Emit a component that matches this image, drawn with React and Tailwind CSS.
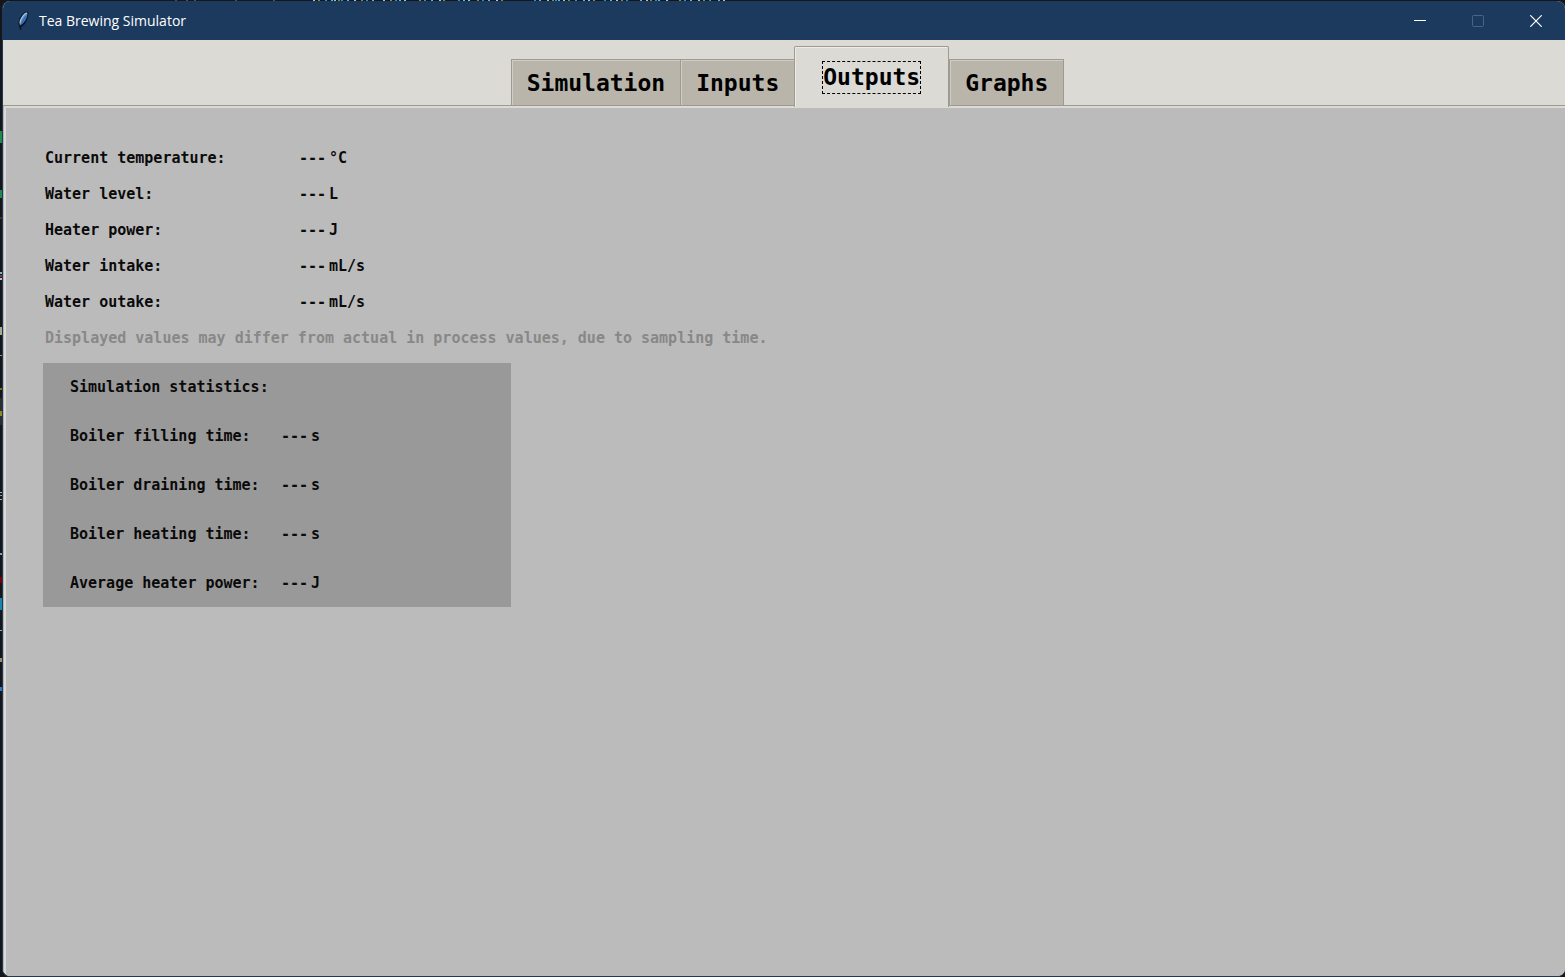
import React, { useState } from "react";

const tabs = ["Simulation", "Inputs", "Outputs", "Graphs"];

const readings = [
  ["Current temperature:", "---", "°C"],
  ["Water level:", "---", "L"],
  ["Heater power:", "---", "J"],
  ["Water intake:", "---", "mL/s"],
  ["Water outake:", "---", "mL/s"],
];

const statistics = [
  ["Boiler filling time:", "---", "s"],
  ["Boiler draining time:", "---", "s"],
  ["Boiler heating time:", "---", "s"],
  ["Average heater power:", "---", "J"],
];

// Glimpses of the editor behind the window: [y, height, colour]
const leftMarks = [
  [131, 12, "#1f8a4c"],
  [190, 8, "#1f8a4c"],
  [217, 2, "#5a2a1a"],
  [272, 2, "#7fb2cc"],
  [275, 2, "#a03030"],
  [278, 2, "#b9c4c9"],
  [327, 8, "#a9a98c"],
  [355, 1, "#b08080"],
  [388, 2, "#8a6a10"],
  [411, 5, "#8a8a20"],
  [492, 1, "#b0b0b0"],
  [495, 1, "#6f9fc0"],
  [499, 1, "#b0b0b0"],
  [553, 2, "#7f9fb5"],
  [577, 6, "#7a0008"],
  [598, 12, "#1b86ad"],
  [630, 1, "#7fb2cc"],
  [658, 4, "#9a8a70"],
  [687, 4, "#2f78c8"],
];

const topMarks = [
  175, 186, 194, 235, 273, 313, 318, 325, 331, 334, 338, 341, 347, 354, 361,
  366, 372, 383, 390, 395, 399, 404, 419, 424, 431, 439, 443, 458, 463, 468,
  477, 482, 488, 496, 501, 534, 539, 547, 552, 555, 558, 563, 568, 575, 583,
  588, 593, 604, 610, 616, 621, 626, 640, 646, 650, 655, 658, 666, 679, 684,
  690, 698, 703, 709, 718, 723,
];
const topColours = ["#5fb4cf", "#9cc3d8", "#8a8a30", "#2f8fd0"];

function Desktop() {
  return (
    <svg
      className="pointer-events-none absolute left-0 top-0 h-full w-full"
      aria-hidden="true"
    >
      <rect x="0" y="398" width="2" height="27" fill="#2b2d33" />
      {leftMarks.map(([y, h, c]) => (
        <rect key={y} x="0" y={y} width="2" height={h} fill={c} />
      ))}
      {topMarks.map((x, i) => (
        <rect
          key={x}
          x={x}
          y="0"
          width="2"
          height="1"
          fill={x < 300 ? "#5c4a45" : topColours[i % 4]}
        />
      ))}
    </svg>
  );
}

function Feather() {
  return (
    <svg width="16" height="20" viewBox="0 0 16 20" aria-hidden="true">
      <path
        d="M12.800 .3C9 .8 6.500 3.500 4.600 7.500L3.200 12 4 15.500 5 19 6.300 18.500 6.500 16C10.500 13.500 13 8.500 13.400 2Z"
        fill="#0c1624"
      />
      <path
        d="M12.300 1.500C9 2.600 6.800 5.500 5.300 9L4.700 14.500C8.500 13 11.800 8 12.400 3Z"
        fill="#4387d6"
      />
      <path
        d="M12 1.800C9 3 7 6 5.500 9.500L5 12.500"
        stroke="#a9bfcc"
        strokeWidth="1.400"
        fill="none"
      />
      <path d="M10.600 5.500 6.500 12.500" stroke="#1f4a85" strokeWidth=".7" />
    </svg>
  );
}

function TitleBar() {
  return (
    <header className="flex h-[39px] items-center bg-[#1c3a5e] pl-3 text-white">
      <Feather />
      <h1 className="ml-2 flex-1 font-['Open_Sans','Noto_Sans',sans-serif] text-[14px] font-normal leading-5">
        Tea Brewing Simulator
      </h1>
      <button aria-label="Minimize" className="flex h-full w-[58px] items-center justify-center">
        <svg width="12" height="12" viewBox="0 0 12 12">
          <path d="M0 5.500H12" stroke="#fff" />
        </svg>
      </button>
      <button
        aria-label="Maximize"
        disabled
        className="flex h-full w-[58px] items-center justify-center"
      >
        <svg width="12" height="12" viewBox="0 0 12 12" fill="none">
          <rect x=".5" y=".5" width="11" height="11" rx="1" stroke="#4a6483" />
        </svg>
      </button>
      <button aria-label="Close" className="flex h-full w-[58px] items-center justify-center">
        <svg width="12" height="12" viewBox="0 0 12 12">
          <path d="M.3 .3 11.700 11.700M11.700 .3 .3 11.700" stroke="#fff" strokeWidth="1.200" />
        </svg>
      </button>
    </header>
  );
}

function Tab({ name, active, onSelect }) {
  return (
    <button
      role="tab"
      aria-selected={active}
      onClick={onSelect}
      className={
        active
          ? "relative -mb-[2px] flex h-[61px] items-start justify-center rounded-t-[2px] border border-b-0 border-[#9e9a91] bg-[#dcdad5] px-[27px] pt-[14px] shadow-[inset_1px_1px_0_#eeebe7]"
          : "flex h-[46px] items-center justify-center border-l border-t border-[#9e9a91] bg-[#bab5ab] px-[15px] pt-[2px] shadow-[inset_1px_1px_0_#cfcdc8] last:border-r"
      }
    >
      <span
        className={
          active
            ? "border border-dashed border-black leading-[31px]"
            : "leading-[31px]"
        }
      >
        {name}
      </span>
    </button>
  );
}

function Reading({ row, className }) {
  const [label, value, unit] = row;
  return (
    <div className={className}>
      <dt>{label}</dt>
      <dd>{value}</dd>
      <dd>{unit}</dd>
    </div>
  );
}

export default function App() {
  const [current, setCurrent] = useState("Outputs");
  return (
    <div className="relative flex min-h-screen flex-col bg-[#15161a] pl-[2px] pt-px">
      <Desktop />
      <div className="relative flex flex-1 flex-col overflow-hidden rounded-[8px] border-b border-l border-[#1c3a5e] bg-[#dcdad5] font-['DejaVu_Sans_Mono','Liberation_Mono',monospace] font-bold text-[#0a0a0a]">
        <TitleBar />
        <nav
          role="tablist"
          className="flex h-[66px] items-end justify-center border-b border-[#9e9a91] pl-[7px] text-[23px] text-black"
        >
          {tabs.map((name) => (
            <Tab
              key={name}
              name={name}
              active={name === current}
              onSelect={() => setCurrent(name)}
            />
          ))}
        </nav>
        <main className="flex flex-1 flex-col border-l border-[#b5b2ab] pl-[2px] pt-[2px]">
          <section
            aria-label="Outputs"
            className="flex-1 bg-[#bbbbbb] pl-[37px] pt-8 text-[15px]"
          >
            <dl className="pl-[2px]">
              {readings.map((row) => (
                <Reading
                  key={row[0]}
                  row={row}
                  className="grid h-9 grid-cols-[254px_30px_auto] items-center"
                />
              ))}
            </dl>
            <p className="flex h-9 items-center pl-[2px] text-[#888888]">
              Displayed values may differ from actual in process values, due to sampling time.
            </p>
            <div className="mt-[7px] flex w-[468px] max-w-full flex-col gap-px bg-[#999999] pl-[27px]">
              <h2 className="flex h-12 items-center">Simulation statistics:</h2>
              <dl className="flex flex-col gap-px">
                {statistics.map((row) => (
                  <Reading
                    key={row[0]}
                    row={row}
                    className="grid h-12 grid-cols-[211px_30px_auto] items-center"
                  />
                ))}
              </dl>
            </div>
          </section>
        </main>
      </div>
    </div>
  );
}
